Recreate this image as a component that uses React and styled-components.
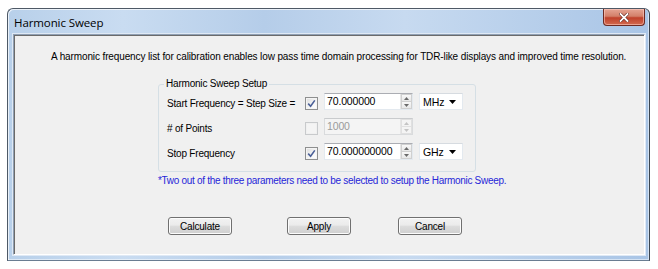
import React from "react";
import styled, { createGlobalStyle } from "styled-components";

const GlobalStyle = createGlobalStyle`
  html, body { margin: 0; padding: 0; background: #ffffff; }
  body { font-family: "Liberation Sans", Arial, sans-serif; font-size: 10px; color: #000; }
  * { box-sizing: border-box; }
`;

const Page = styled.div`
  padding: 8px 0 0 7px;
`;

const Window = styled.div`
  width: 643px;
  height: 253px;
  display: flex;
  flex-direction: column;
  border: 1px solid #4e5966;
  border-bottom-color: #6a7d92;
  border-right-color: #3b4550;
  border-radius: 6px 6px 0 0;
  background: linear-gradient(90deg, #b8d0ea 0%, #c9dcf1 18%, #b5cde9 40%, #c7daf0 62%, #a9c5e6 100%);
  box-shadow: inset 1px 1px 0 rgba(255, 255, 255, 0.7), inset -1px -1px 0 rgba(255, 255, 255, 0.5);
  padding: 0 4px 5px 5px;
`;

const TitleBar = styled.div`
  height: 25px;
  display: flex;
  align-items: flex-start;
  justify-content: space-between;
  flex-shrink: 0;
`;

const Title = styled.span`
  font-family: "Open Sans", "Liberation Sans", sans-serif;
  font-size: 11.5px;
  color: #000;
  padding: 6px 0 0 1px;
  letter-spacing: -0.1px;
`;

const CloseButton = styled.div`
  width: 42px;
  height: 17px;
  border: 1px solid #6d2a22;
  border-top: none;
  border-radius: 0 0 4px 4px;
  background: linear-gradient(180deg, #e5a493 0%, #d3806a 45%, #c0412b 55%, #d26a4f 100%);
  box-shadow: inset 0 0 0 1px rgba(255, 210, 200, 0.55);
  display: flex;
  align-items: center;
  justify-content: center;
`;

const Client = styled.div`
  flex: 1;
  background: #f0f0f0;
  border: 1px solid;
  border-color: #8f9fb3 #ffffff #ffffff #8f9fb3;
  box-shadow: inset 1px 1px 0 #6b6b6b, 0 0 0 1px #dfe9f5;
  display: flex;
  flex-direction: column;
  padding: 15px 0 0 0;
`;

const Description = styled.p`
  margin: 0 0 0 37px;
  line-height: 13px;
  letter-spacing: -0.12px;
  white-space: nowrap;
`;

const GroupBox = styled.fieldset`
  width: 318px;
  margin: 15px 0 0 144px;
  padding: 3px 0 11px 7px;
  border: 1px solid #d5dfe5;
  border-radius: 3px;
`;

const Legend = styled.legend`
  padding: 0 2px;
  margin-left: -2px;
  line-height: 12px;
  letter-spacing: -0.2px;
`;

const Rows = styled.div`
  display: grid;
  grid-template-columns: 133px 13px 89px 44px;
  column-gap: 6px;
  row-gap: 8px;
`;

const Label = styled.span`
  line-height: 12px;
  padding: 5px 0 0 1px;
  letter-spacing: -0.2px;
  white-space: nowrap;
`;

const CheckBox = styled.div`
  width: 13px;
  height: 13px;
  margin-top: 4px;
  border: 1px solid ${(p) => (p.$disabled ? "#c8cacc" : "#8e8f8f")};
  background: ${(p) =>
    p.$disabled ? "#f4f4f4" : "linear-gradient(135deg, #dcdcdc 0%, #f6f6f6 60%, #ffffff 100%)"};
  box-shadow: inset 0 0 0 1px ${(p) => (p.$disabled ? "#f0f0f0" : "#f4f4f4")};
  display: flex;
  align-items: center;
  justify-content: center;
`;

const SpinField = styled.div`
  height: 17px;
  display: flex;
  border: 1px solid;
  border-color: ${(p) => (p.$disabled ? "#c9cbcd #d9dbdd #d9dbdd #d9dbdd" : "#abadb3 #e3e9ef #e3e9ef #e3e9ef")};
  background: ${(p) => (p.$disabled ? "#f4f4f4" : "#ffffff")};
`;

const FieldText = styled.span`
  flex: 1;
  padding: 1px 0 0 2px;
  line-height: 13px;
  font-size: 10.5px;
  letter-spacing: -0.15px;
  color: ${(p) => (p.$disabled ? "#9b9b9b" : "#000")};
`;

const Spinner = styled.div`
  width: 12px;
  display: flex;
  flex-direction: column;
  border-left: 1px solid #e6e6e6;
`;

const SpinHalf = styled.div`
  flex: 1;
  display: flex;
  align-items: center;
  justify-content: center;
  background: ${(p) => (p.$disabled ? "#f4f4f4" : "linear-gradient(180deg, #f8f8f8, #e8e8e8)")};
  border: 1px solid ${(p) => (p.$disabled ? "#e0e0e0" : "#d0d0d0")};
  & + & { border-top: none; }
`;

const Combo = styled.div`
  height: 17px;
  border: 1px solid #e3e9ef;
  border-top-color: #d6dbe0;
  background: #ffffff;
  display: flex;
  align-items: center;
  justify-content: space-between;
  padding: 0 6px 0 3px;
  font-size: 10.5px;
  letter-spacing: -0.1px;
`;

const Note = styled.p`
  margin: 3px 0 0 144px;
  color: #2626d8;
  line-height: 12px;
  letter-spacing: -0.3px;
  white-space: nowrap;
`;

const ButtonRow = styled.div`
  display: flex;
  margin: 30px 0 0 154px;
`;

const Button = styled.div`
  width: 64px;
  height: 18px;
  margin-left: ${(p) => p.$offset || 0}px;
  border: 1px solid #707070;
  border-radius: 3px;
  background: linear-gradient(180deg, #f2f2f2 0%, #ebebeb 45%, #dddddd 50%, #cfcfcf 100%);
  box-shadow: inset 0 0 0 1px #fcfcfc;
  display: flex;
  align-items: center;
  justify-content: center;
  letter-spacing: -0.2px;
`;

const Check = () => (
  <svg width="9" height="9" viewBox="0 0 9 9">
    <path d="M1.2 4.6 L3.6 7.2 L7.8 1.4" fill="none" stroke="#4a5f97" strokeWidth="1.6" />
  </svg>
);

const Up = ({ dim }) => (
  <svg width="5" height="3" viewBox="0 0 5 3">
    <path d="M0 3 L2.5 0 L5 3 Z" fill={dim ? "#c4c4c4" : "#6a6a6a"} />
  </svg>
);
const Down = ({ dim }) => (
  <svg width="5" height="3" viewBox="0 0 5 3">
    <path d="M0 0 L2.5 3 L5 0 Z" fill={dim ? "#c4c4c4" : "#6a6a6a"} />
  </svg>
);

const ComboArrow = () => (
  <svg width="7" height="4" viewBox="0 0 7 4">
    <path d="M0 0 L7 0 L3.5 4 Z" fill="#000" />
  </svg>
);

const CloseX = () => (
  <svg width="10" height="9" viewBox="0 0 10 9">
    <path d="M1.5 1 L8.5 8 M8.5 1 L1.5 8" stroke="#5a1f18" strokeWidth="3" strokeLinecap="square" />
    <path d="M1.5 1 L8.5 8 M8.5 1 L1.5 8" stroke="#ffffff" strokeWidth="1.8" strokeLinecap="square" />
  </svg>
);

const rows = [
  { label: "Start Frequency = Step Size =", checked: true, value: "70.000000", unit: "MHz" },
  { label: "# of Points", checked: false, value: "1000", disabled: true },
  { label: "Stop Frequency", checked: true, value: "70.000000000", unit: "GHz" },
];

export default function App() {
  return (
    <>
      <GlobalStyle />
      <Page>
        <Window>
          <TitleBar>
            <Title>Harmonic Sweep</Title>
            <CloseButton>
              <CloseX />
            </CloseButton>
          </TitleBar>
          <Client>
            <Description>
              A harmonic frequency list for calibration enables low pass time domain processing for TDR-like displays and improved time resolution.
            </Description>
            <GroupBox>
              <Legend>Harmonic Sweep Setup</Legend>
              <Rows>
                {rows.map((r) => (
                  <React.Fragment key={r.label}>
                    <Label>{r.label}</Label>
                    <CheckBox $disabled={r.disabled}>{r.checked && <Check />}</CheckBox>
                    <SpinField $disabled={r.disabled}>
                      <FieldText $disabled={r.disabled}>{r.value}</FieldText>
                      <Spinner>
                        <SpinHalf $disabled={r.disabled}>
                          <Up dim={r.disabled} />
                        </SpinHalf>
                        <SpinHalf $disabled={r.disabled}>
                          <Down dim={r.disabled} />
                        </SpinHalf>
                      </Spinner>
                    </SpinField>
                    {r.unit ? (
                      <Combo>
                        <span>{r.unit}</span>
                        <ComboArrow />
                      </Combo>
                    ) : (
                      <span />
                    )}
                  </React.Fragment>
                ))}
              </Rows>
            </GroupBox>
            <Note>*Two out of the three parameters need to be selected to setup the Harmonic Sweep.</Note>
            <ButtonRow>
              <Button>Calculate</Button>
              <Button $offset={55}>Apply</Button>
              <Button $offset={47}>Cancel</Button>
            </ButtonRow>
          </Client>
        </Window>
      </Page>
    </>
  );
}
